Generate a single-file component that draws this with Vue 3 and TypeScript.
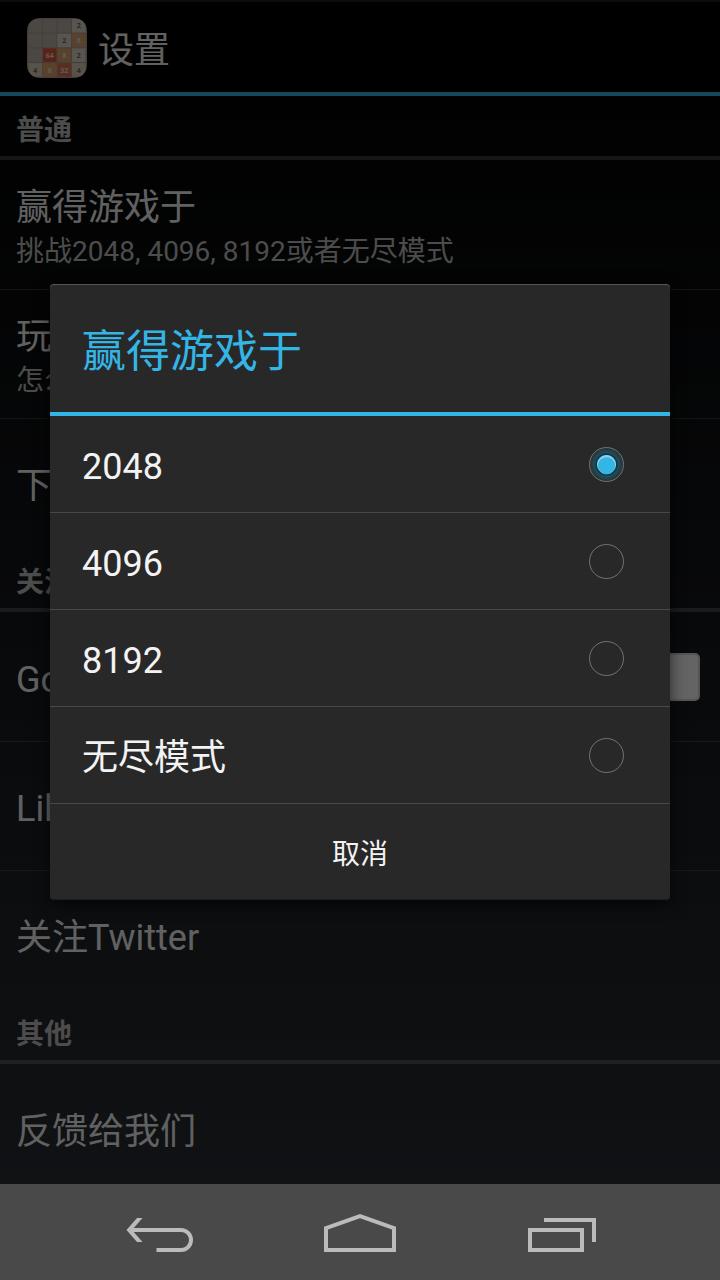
<script setup lang="ts">
import { ref } from 'vue'

interface Item {
  title: string
  summary?: string
  plusOne?: boolean
}
interface Section {
  name: string
  items: Item[]
}
interface Tile {
  x: number
  y: number
  fill: string
  color: string
  label: string
}

const sections: Section[] = [
  {
    name: '普通',
    items: [
      { title: '赢得游戏于', summary: '挑战2048, 4096, 8192或者无尽模式' },
      { title: '玩法', summary: '怎么玩' },
      { title: '下载' },
    ],
  },
  {
    name: '关注',
    items: [{ title: 'Google', plusOne: true }, { title: 'Like' }, { title: '关注Twitter' }],
  },
  { name: '其他', items: [{ title: '反馈给我们' }] },
]

const options: string[] = ['2048', '4096', '8192', '无尽模式']
const selected = ref<string>('2048')

const palette: Record<string, [string, string]> = {
  '': ['#ccc0b4', '#776e65'],
  '2': ['#eee4da', '#776e65'],
  '4': ['#ede0c8', '#776e65'],
  '8': ['#f2b179', '#f9f6f2'],
  '32': ['#f67c5f', '#f9f6f2'],
  '64': ['#f65e3b', '#f9f6f2'],
}
const board: string[][] = [
  ['', '', '', '2'],
  ['', '', '2', '8'],
  ['', '64', '8', '2'],
  ['4', '8', '32', '4'],
]
const tiles: Tile[] = board.flatMap((row, r) =>
  row.map((label, c) => ({
    x: 1.5 + c * 14.5,
    y: 1 + r * 14.7,
    fill: palette[label][0],
    color: palette[label][1],
    label,
  })),
)
</script>

<template>
  <div class="screen">
    <div class="stage">
      <header class="bar">
        <svg class="app-icon" viewBox="0 0 60 60" aria-hidden="true">
          <defs>
            <clipPath id="icon-shape"><rect width="60" height="60" rx="13" /></clipPath>
          </defs>
          <g clip-path="url(#icon-shape)">
            <rect width="60" height="60" fill="#bbada0" />
            <template v-for="t in tiles" :key="t.x + '-' + t.y">
              <rect :x="t.x" :y="t.y" width="13.5" height="13.5" :fill="t.fill" />
              <text v-if="t.label" :x="t.x + 6.8" :y="t.y + 9.4" :fill="t.color" class="tile-label">{{ t.label }}</text>
            </template>
          </g>
        </svg>
        <h1>设置</h1>
      </header>

      <main>
        <section v-for="s in sections" :key="s.name">
          <h2>{{ s.name }}</h2>
          <ul>
            <li v-for="i in s.items" :key="i.title">
              <div class="item-text">
                <div class="item-title">{{ i.title }}</div>
                <div v-if="i.summary" class="item-summary">{{ i.summary }}</div>
              </div>
              <button v-if="i.plusOne" type="button" class="plus-one" aria-label="Google"></button>
            </li>
          </ul>
        </section>
      </main>

      <div class="scrim">
        <form class="dialog" role="dialog" aria-labelledby="dialog-title" @submit.prevent>
          <h3 id="dialog-title">赢得游戏于</h3>
          <label v-for="o in options" :key="o" class="option">
            <span>{{ o }}</span>
            <input v-model="selected" type="radio" name="goal" :value="o" />
          </label>
          <button type="button" class="cancel">取消</button>
        </form>
      </div>
    </div>

    <nav>
      <button type="button" aria-label="返回">
        <svg viewBox="0 0 200 96">
          <path d="M66.500 46 77 34H82.500L72 46 82.500 58H77Z" fill="#bbb" />
          <path d="M70 46H121A10 10 0 0 1 121 66H96.500" />
        </svg>
      </button>
      <button type="button" aria-label="主屏幕">
        <svg viewBox="0 0 200 96"><path d="M66 66V44.200L100 32 134 44.200V66Z" /></svg>
      </button>
      <button type="button" aria-label="最近任务">
        <svg viewBox="0 0 200 96">
          <path d="M84 36H134V58" />
          <rect x="70" y="46" width="52" height="20" />
        </svg>
      </button>
    </nav>
  </div>
</template>

<style>
body {
  margin: 0;
  background: #000;
}
</style>

<style scoped>
.screen {
  display: flex;
  flex-direction: column;
  height: 100vh;
  font-family: Roboto, 'Noto Sans CJK SC', sans-serif;
  color: #f3f3f3;
}
.stage {
  position: relative;
  flex: 1;
  min-height: 0;
  overflow: hidden;
  background: linear-gradient(#000, #282d33);
}
h1,
h2,
h3,
ul {
  margin: 0;
  padding: 0;
  font-weight: 400;
}
.bar {
  box-sizing: border-box;
  display: flex;
  align-items: center;
  gap: 11px;
  height: 96px;
  padding: 2px 27px 0;
  background: #000;
  border-top: 2px solid #202020;
  border-bottom: 4px solid #33b5e5;
}
.app-icon {
  width: 60px;
  height: 60px;
  opacity: 0.92;
}
.tile-label {
  font: 700 7px 'Open Sans', sans-serif;
  text-anchor: middle;
}
h1 {
  padding-top: 6px;
  font-size: 36px;
  line-height: 44px;
}
h2 {
  box-sizing: border-box;
  height: 64px;
  padding: 6px 16px 0;
  font-size: 28px;
  font-weight: 700;
  line-height: 58px;
  color: #bebebe;
  border-bottom: 4px solid rgba(255, 255, 255, 0.2);
}
ul {
  list-style: none;
  padding: 1px 0;
}
li {
  display: flex;
  align-items: center;
  justify-content: space-between;
  height: 128px;
  padding: 0 20px 0 16px;
}
li + li {
  border-top: 1px solid rgba(255, 255, 255, 0.14);
}
.item-text {
  padding-top: 6px;
}
.item-title {
  font-size: 36px;
  line-height: 48px;
}
.item-summary {
  font-size: 28px;
  line-height: 40px;
  color: #bebebe;
}
.plus-one {
  width: 76px;
  height: 48px;
  background: #fafafa;
  border: 2px solid #d4d4d4;
  border-radius: 5px;
}
.scrim {
  position: absolute;
  inset: 0;
  display: flex;
  align-items: center;
  justify-content: center;
  padding: 0 50px;
  background: rgba(0, 0, 0, 0.6);
}
.dialog {
  flex: 1;
  overflow: hidden;
  background: #282828;
  border-radius: 4px;
  box-shadow: 0 4px 16px rgba(0, 0, 0, 0.6), inset 0 1px #555, inset 0 -1px #1c1c1c;
}
h3 {
  padding: 8px 32px 0;
  font-size: 44px;
  line-height: 120px;
  color: #33b5e5;
  border-bottom: 4px solid #33b5e5;
}
.option {
  display: flex;
  align-items: center;
  justify-content: space-between;
  height: 96px;
  padding: 0 46px 0 32px;
  font-size: 36px;
  line-height: 48px;
  border-bottom: 1px solid #484848;
}
.option span {
  padding-top: 6px;
}
.option input {
  appearance: none;
  box-sizing: border-box;
  width: 35px;
  height: 35px;
  margin: 0;
  border: 1px solid #737373;
  border-radius: 50%;
}
.option input:checked {
  background:
    radial-gradient(circle at 50% 54%, #33b5e5 8px, transparent 9px),
    radial-gradient(circle, #7fd3f2 9px, #172f38 10px, #1f4d5b 12px, #282f32 17px);
}
.cancel {
  width: 100%;
  height: 96px;
  padding: 0;
  font: inherit;
  font-size: 28px;
  color: #f3f3f3;
  background: none;
  border: 0;
}
nav {
  display: flex;
  justify-content: center;
  height: 96px;
  padding: 0 60px;
  background: #49494a;
}
nav button {
  flex: 1;
  height: 96px;
  padding: 0;
  background: none;
  border: 0;
}
nav svg {
  display: block;
  width: 100%;
  height: 96px;
  fill: none;
  stroke: #bbb;
  stroke-width: 4;
}
nav path[fill] {
  stroke: none;
}
</style>
